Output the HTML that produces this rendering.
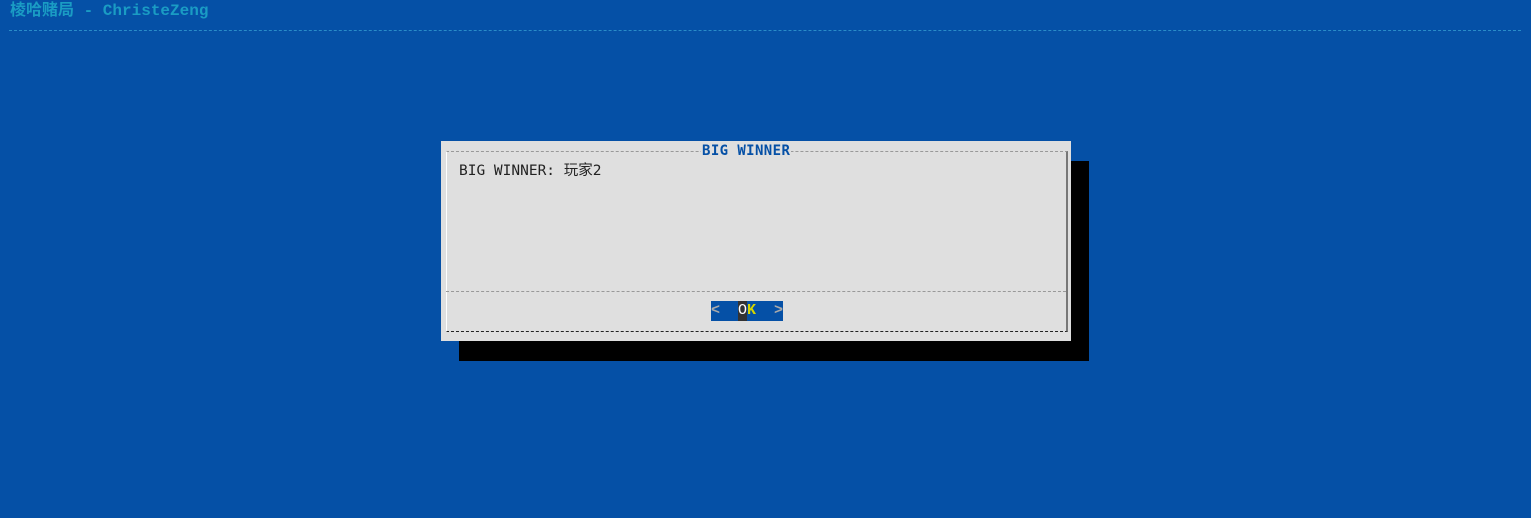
<!DOCTYPE html>
<html><head><meta charset="utf-8"><style>
body{margin:0;width:1531px;height:518px;background:#0550a6;position:relative;overflow:hidden;font-family:"DejaVu Sans Mono","Noto Sans CJK SC",monospace;font-size:15px}
.a{position:absolute}
</style></head><body>
<div class="a" style="left:10px;top:1px;color:#1a9cc4;font-weight:bold;font-size:16px;line-height:20px;font-family:'Liberation Mono','Noto Sans CJK SC',monospace">棱哈赌局 - ChristeZeng</div>
<div class="a" style="left:9px;top:30px;width:1512px;border-top:1px dashed #2a8cc8"></div>
<div class="a" style="left:459px;top:161px;width:630px;height:200px;background:#000"></div>
<div class="a" style="left:441px;top:141px;width:630px;height:200px;background:#dfdfdf"></div>
<div class="a" style="left:446px;top:151px;width:619px;height:179px;border:1px dashed #999;border-bottom:1px dashed #222;border-right:2px solid #777;border-left:1px solid #fff"></div>
<div class="a" style="left:446px;top:291px;width:620px;border-top:1px dashed #999"></div>
<div class="a" style="left:701px;top:142px;background:#dfdfdf;color:#0550a6;font-weight:bold;line-height:18px;font-size:14px;padding:0 1px;letter-spacing:0.4px">BIG WINNER</div>
<div class="a" style="left:459px;top:161px;color:#222;line-height:20px;font-size:14.5px">BIG WINNER: 玩家2</div>
<div class="a" style="left:711px;top:301px;width:72px;height:20px;background:#0550a6"></div>
<div class="a" style="left:738px;top:301px;width:9px;height:20px;background:#333"></div>
<div class="a" style="left:711px;top:301px;line-height:20px;color:#aaa;white-space:pre;font-family:'Liberation Mono',monospace;font-weight:bold">&lt;  <span style="color:#fff;font-weight:normal">O</span><span style="color:#d6d600">K</span>  &gt;</div>
</body></html>
